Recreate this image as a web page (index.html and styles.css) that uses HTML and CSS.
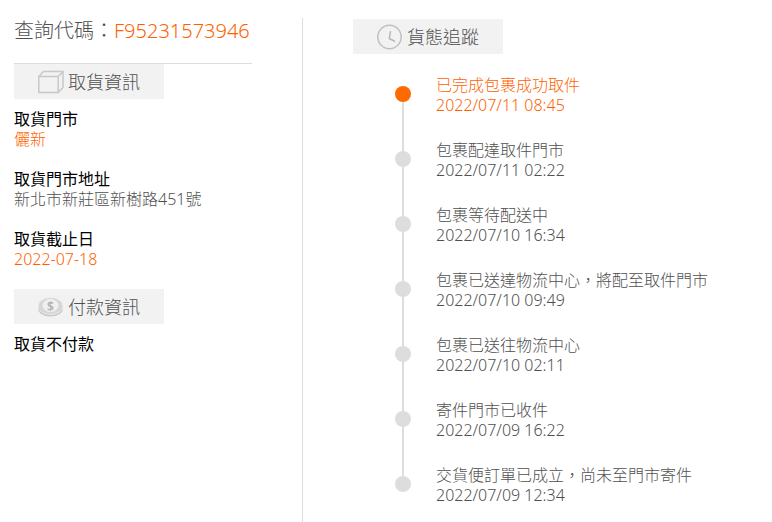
FILE: index.html
```html
<!DOCTYPE html>
<html lang="zh-Hant">
<head>
<meta charset="utf-8">
<title>貨態追蹤</title>
<link rel="stylesheet" href="styles.css">
</head>
<body>
<main class="page">
  <section class="info">
    <h1 class="code">查詢代碼：<span class="accent">F95231573946</span></h1>
    <h2 class="tag">
      <svg class="icon" viewBox="0 0 26 26" width="26" height="26"><path d="M.8 7.500h19.400v16H.8zM.8 7.500 5.500 2.500H25V18.500L20.200 23.500M20.200 7.500 25 2.500" fill="none" stroke="#c8c8c8" stroke-width="1.500"/></svg>
      <span>取貨資訊</span>
    </h2>
    <dl class="fields">
      <dt>取貨門市</dt>
      <dd class="accent">儷新</dd>
      <dt>取貨門市地址</dt>
      <dd>新北市新莊區新樹路451號</dd>
      <dt>取貨截止日</dt>
      <dd class="accent">2022-07-18</dd>
    </dl>
    <h2 class="tag">
      <svg class="icon" viewBox="0 0 26 26" width="26" height="26"><ellipse cx="12.500" cy="14.500" rx="12.500" ry="8" fill="#c9c9c9"/><ellipse cx="12.500" cy="12" rx="12.500" ry="8.500" fill="#d6d6d6" stroke="#f2f2f2" stroke-width="0.800"/><ellipse cx="12.500" cy="11.500" rx="8" ry="6.500" fill="#f0f0f0"/><text x="12.500" y="16.500" text-anchor="middle" class="coin">$</text></svg>
      <span>付款資訊</span>
    </h2>
    <p class="note">取貨不付款</p>
  </section>
  <section class="track">
    <h2 class="tag">
      <svg class="icon" viewBox="0 0 26 26" width="26" height="26"><circle cx="12.500" cy="13" r="11.700" fill="none" stroke="#c0c0c0" stroke-width="1.500"/><path d="M13.500 7 12.300 14.500 18 17.500" fill="none" stroke="#b8b8b8" stroke-width="1.500"/></svg>
      <span>貨態追蹤</span>
    </h2>
    <ol class="steps">
      <li class="step current"><span class="dot"></span><div>已完成包裹成功取件<br>2022/07/11 08:45</div></li>
      <li class="step"><span class="dot"></span><div>包裹配達取件門市<br>2022/07/11 02:22</div></li>
      <li class="step"><span class="dot"></span><div>包裹等待配送中<br>2022/07/10 16:34</div></li>
      <li class="step"><span class="dot"></span><div>包裹已送達物流中心，將配至取件門市<br>2022/07/10 09:49</div></li>
      <li class="step"><span class="dot"></span><div>包裹已送往物流中心<br>2022/07/10 02:11</div></li>
      <li class="step"><span class="dot"></span><div>寄件門市已收件<br>2022/07/09 16:22</div></li>
      <li class="step"><span class="dot"></span><div>交貨便訂單已成立，尚未至門市寄件<br>2022/07/09 12:34</div></li>
    </ol>
  </section>
</main>
</body>
</html>
```
FILE: styles.css
```css
* { box-sizing: border-box; }
html, body { margin: 0; height: 100%; overflow: hidden; }
body {
  background: #fff;
  color: #505050;
  font: 300 16px/20px "Noto Sans", "Noto Sans CJK TC", sans-serif;
}
.page { display: flex; height: 522px; padding: 18px 0 0 14px; }
.info { width: 238px; margin-right: 50px; }
.code {
  margin: 0;
  height: 46px;
  padding-top: 1px;
  border-bottom: 1px solid #ddd;
  font-size: 20px;
  font-weight: 300;
  line-height: 24px;
  color: #505050;
}
.accent { color: #ff5f00; }
.tag {
  display: flex;
  align-items: center;
  gap: 4px;
  width: 150px;
  height: 35px;
  margin: 0;
  padding-left: 24px;
  background: #f2f2f2;
  font-size: 18px;
  font-weight: 300;
  color: #505050;
}
.coin { font: 700 12px "Open Sans", sans-serif; fill: #b4b4b4; }
.fields { margin: 10px 0 20px; }
.fields dt { color: #000; font-weight: 400; }
.fields dd { margin: 0 0 20px; }
.fields dd:last-child { margin-bottom: 0; }
.note { margin: 10px 0 0; color: #000; font-weight: 400; }
.track {
  flex: 1;
  border-left: 1px solid #ddd;
  padding: 1px 0 0 50px;
}
.steps { list-style: none; margin: 21px 0 0; padding: 0 0 0 42px; }
.step { position: relative; display: flex; height: 65px; padding-left: 41px; }
.step:not(:last-child)::before {
  content: "";
  position: absolute;
  left: 7px;
  top: 20px;
  width: 2px;
  height: 65px;
  background: #ddd;
}
.dot {
  position: absolute;
  left: 0;
  top: 11px;
  width: 16px;
  height: 16px;
  border-radius: 50%;
  background: #ddd;
}
.current { color: #ff5f00; }
.current .dot { background: #ff6a00; }
```
